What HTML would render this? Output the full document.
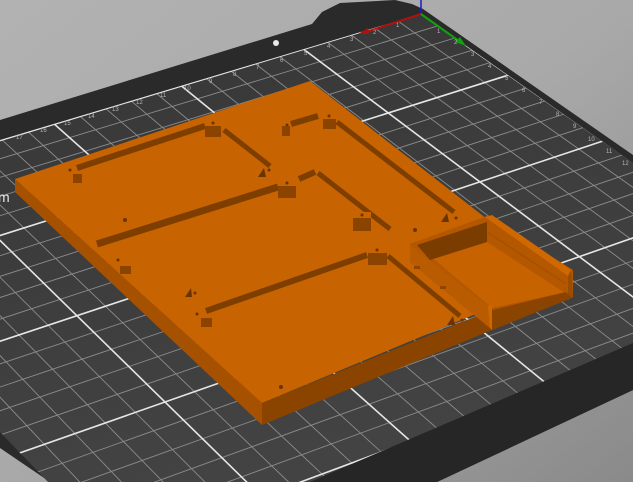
<!DOCTYPE html>
<html><head><meta charset="utf-8"><style>
html,body{margin:0;padding:0;width:633px;height:482px;overflow:hidden;background:#a8a8a8}
svg{display:block}
</style></head><body>
<svg id="s" width="633" height="482" viewBox="0 0 633 482" xmlns="http://www.w3.org/2000/svg">
<defs>
<linearGradient id="bg" x1="0" y1="0" x2="1" y2="1">
<stop offset="0" stop-color="#b2b2b2"/><stop offset="0.5" stop-color="#a9a9a9"/><stop offset="1" stop-color="#8a8a8a"/>
</linearGradient>
<linearGradient id="gr" x1="0" y1="0" x2="0.3" y2="1">
<stop offset="0" stop-color="#363636"/><stop offset="1" stop-color="#434343"/>
</linearGradient>
<clipPath id="gc"><polygon points="421,14 0,140 0,432 48,482 310,482 633,343 633,163"/></clipPath>
</defs>
<rect width="633" height="482" fill="url(#bg)"/>
<polygon points="0,120 312,24 322,12 340,3 395,0 412,4 423,9 633,155 633,390 437,482 50,482 0,448" fill="#2a2a2a"/>
<polygon points="310,482 633,343 633,390 437,482" fill="#262626"/>
<polygon points="421,14 0,140 0,432 48,482 310,482 633,343 633,163" fill="url(#gr)"/>
<g id="grid" clip-path="url(#gc)"></g>
<circle cx="276" cy="43" r="3" fill="#e8e8e8"/>
<line x1="421" y1="14" x2="421" y2="0" stroke="#1a1ad0" stroke-width="1.5"/>
<line x1="421" y1="14" x2="366" y2="32" stroke="#b01010" stroke-width="2"/>
<polygon points="358,34 368,28 369,34" fill="#b01010"/>
<line x1="421" y1="14" x2="459" y2="41" stroke="#10a010" stroke-width="2"/>
<polygon points="466,46 455,42 460,37" fill="#10a010"/>
<g font-family="Liberation Sans, sans-serif" font-size="6" fill="#b5b5b5">
<text x="396" y="27">1</text><text x="373" y="34">2</text><text x="350" y="41">3</text><text x="327" y="48">4</text><text x="304" y="55">5</text><text x="280" y="62">6</text><text x="256" y="69">7</text><text x="233" y="76">8</text><text x="209" y="83">9</text><text x="184" y="90">10</text><text x="160" y="97">11</text><text x="136" y="104">12</text><text x="112" y="111">13</text><text x="88" y="118">14</text><text x="64" y="125">15</text><text x="40" y="132">16</text><text x="16" y="139">17</text>
<text x="437" y="33">1</text><text x="454" y="44">2</text><text x="471" y="56">3</text><text x="488" y="68">4</text><text x="505" y="80">5</text><text x="522" y="92">6</text><text x="539" y="104">7</text><text x="556" y="116">8</text><text x="573" y="128">9</text><text x="588" y="141">10</text><text x="606" y="153">11</text><text x="622" y="165">12</text>
</g>
<text x="-2" y="202" font-family="Liberation Sans, sans-serif" font-size="14" fill="#e8e8e8">m</text>

<polygon points="15,179 262,403 262,425 15,192" fill="#a65100"/>
<polygon points="262,403 492,310 492,330 262,425" fill="#8a4400"/>
<polygon points="15,179 310,81 487,219 410,244 490,308 262,403" fill="#c76300"/>
<polygon points="410,244 487,216 573,270 573,297 492,330 490,328 410,262" fill="#b35700"/>
<polygon points="417,245 492,308 566,292 487,222" fill="#c66200"/>
<polygon points="417,245 487,222 487,242 430,260" fill="#7b3c00"/>
<polygon points="487,222 568,275 565,293 487,242" fill="#b35700"/>
<line x1="487" y1="232" x2="566" y2="284" stroke="#a04e00" stroke-width="1"/>
<polygon points="485,217 492,215 571,270 568,276" fill="#d06800"/>
<polygon points="568,276 571,270 573,296 568,300" fill="#9a4c00"/>
<polygon points="410,245 488,306 490,328 410,262" fill="#b95b00"/>
<polygon points="488,306 492,305 492,330 490,328" fill="#d06800"/>
<polygon points="492,310 566,292 572,298 492,330" fill="#8a4400"/>
<rect x="414" y="266" width="6" height="3" fill="#8d4500"/>
<rect x="440" y="286" width="6" height="3" fill="#8d4500"/>
<g stroke="#7d3e00" stroke-width="6" fill="none">
<polyline points="77,168 205,126"/>
<polyline points="224,130 270,166" stroke-width="5"/>
<polyline points="291,124 318,116"/>
<polyline points="337,122 454,212" stroke-width="5"/>
<polyline points="97,244 278,187" stroke-width="7"/>
<polyline points="299,179 315,172"/>
<polyline points="318,173 390,229" stroke-width="5"/>
<polyline points="206,311 367,255"/>
<polyline points="388,256 460,316" stroke-width="5"/>
</g>
<g fill="#8a4400">
<rect x="205" y="125" width="16" height="12"/>
<rect x="323" y="118" width="13" height="11"/>
<rect x="282" y="126" width="8" height="10"/>
<rect x="278" y="185" width="18" height="13"/>
<rect x="353" y="218" width="18" height="13"/>
<rect x="368" y="252" width="19" height="13"/>
<rect x="73" y="174" width="9" height="9"/>
<rect x="201" y="318" width="11" height="9"/>
<rect x="120" y="266" width="11" height="8"/>
</g>
<g fill="#c76300">
<rect x="205" y="120" width="16" height="6"/><rect x="323" y="113" width="13" height="6"/>
<rect x="278" y="180" width="18" height="6"/><rect x="353" y="212" width="18" height="6"/>
<rect x="368" y="247" width="19" height="6"/>
</g>
<g fill="#6a3400">
<circle cx="213" cy="123" r="1.5"/><circle cx="329" cy="116" r="1.5"/><circle cx="287" cy="183" r="1.5"/>
<circle cx="362" cy="215" r="1.5"/><circle cx="377" cy="250" r="1.5"/><circle cx="70" cy="170" r="1.5"/>
<circle cx="197" cy="314" r="1.5"/><circle cx="118" cy="260" r="1.5"/><circle cx="195" cy="293" r="1.5"/>
<circle cx="269" cy="170" r="1.5"/><circle cx="456" cy="218" r="1.5"/><circle cx="462" cy="320" r="1.5"/>
<circle cx="287" cy="125" r="1.5"/>
<circle cx="125" cy="220" r="2"/><circle cx="281" cy="387" r="2"/><circle cx="415" cy="230" r="2"/>
<polygon points="258,177 264,168 266,177"/><polygon points="441,222 447,213 449,222"/>
<polygon points="447,325 453,316 455,325"/><polygon points="185,297 191,288 192,297"/>
</g>
</svg>
<script>
(function(){
var src=[[0,0],[20,0],[0,10],[20,15]],dst=[[421,14],[-78,164],[603,141],[165,402]];
var A=[],b=[];
for(var i=0;i<4;i++){var u=src[i][0],v=src[i][1],x=dst[i][0],y=dst[i][1];
A.push([u,v,1,0,0,0,-u*x,-v*x]);b.push(x);A.push([0,0,0,u,v,1,-u*y,-v*y]);b.push(y);}
var n=8;for(var c=0;c<n;c++){var p=c;for(var r=c+1;r<n;r++)if(Math.abs(A[r][c])>Math.abs(A[p][c]))p=r;
var t=A[c];A[c]=A[p];A[p]=t;t=b[c];b[c]=b[p];b[p]=t;
for(var r=0;r<n;r++){if(r==c)continue;var f=A[r][c]/A[c][c];for(var k=c;k<n;k++)A[r][k]-=f*A[c][k];b[r]-=f*b[c];}}
var h=[];for(var i=0;i<n;i++)h.push(b[i]/A[i][i]);
function P(u,v){var w=h[6]*u+h[7]*v+1;return[(h[0]*u+h[1]*v+h[2])/w,(h[3]*u+h[4]*v+h[5])/w];}
var g=document.getElementById('grid'),ns='http://www.w3.org/2000/svg';
function L(a,c,maj){var l=document.createElementNS(ns,'line');l.setAttribute('x1',a[0]);l.setAttribute('y1',a[1]);l.setAttribute('x2',c[0]);l.setAttribute('y2',c[1]);
l.setAttribute('stroke',maj?'#e6e6e6':'#8c8c8c');l.setAttribute('stroke-width',maj?1.6:0.9);g.appendChild(l);}
for(var m=0;m<2;m++)for(var k=0;k<=30;k++){var maj=k%5==0;if((m==1)!=maj)continue;
L(P(k,0),P(k,30),maj);L(P(0,k),P(30,k),maj);}
})();
</script>
</body></html>
